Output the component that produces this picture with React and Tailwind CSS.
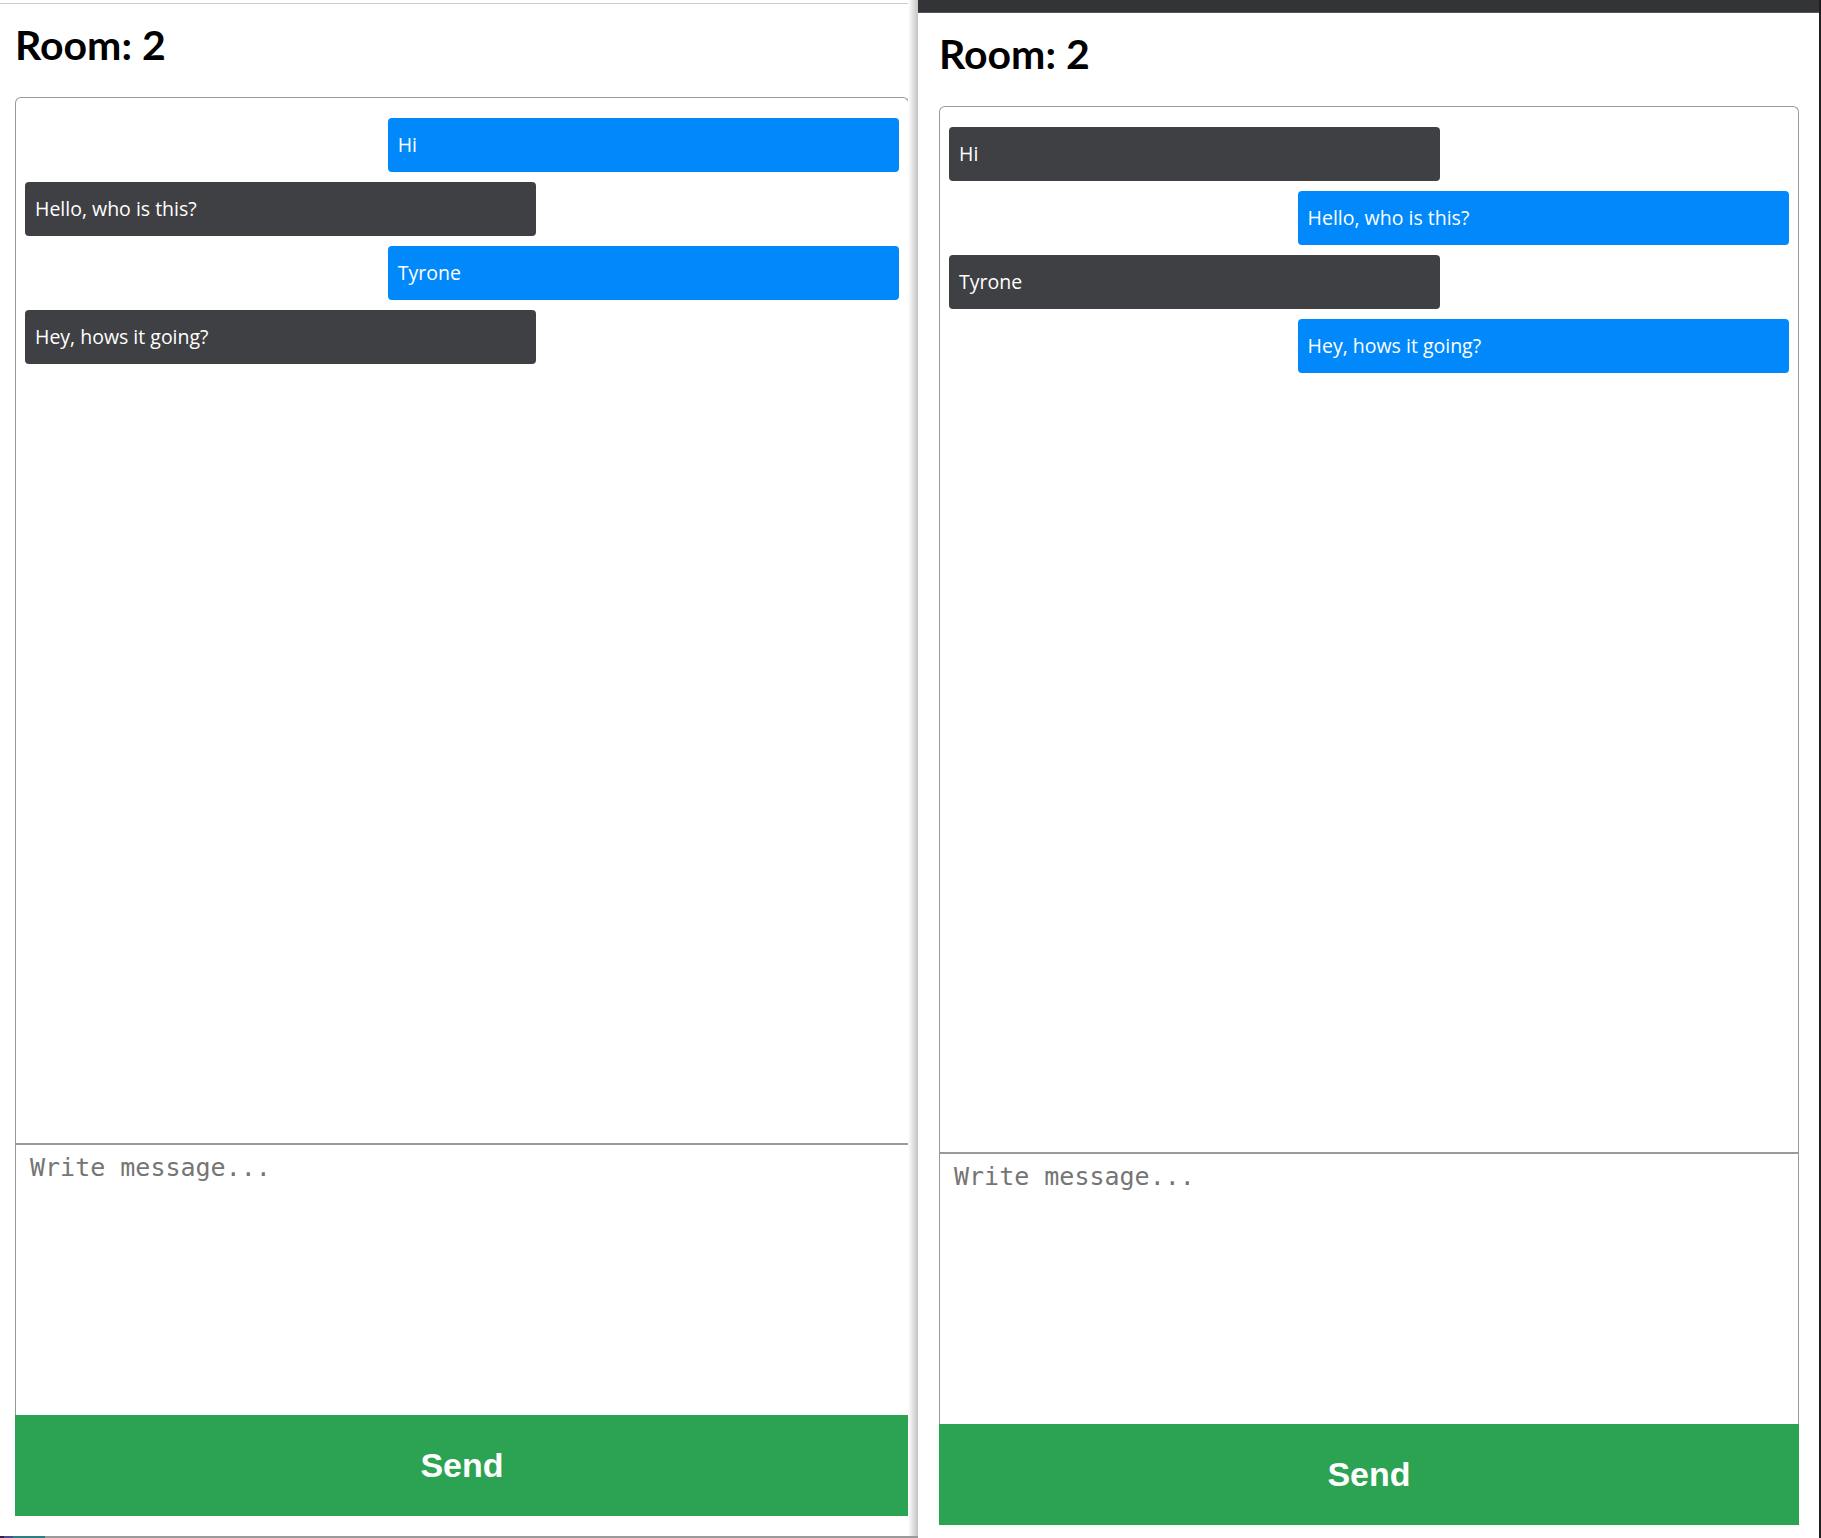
import React from 'react';

const leftMessages = [
  { id: 1, text: 'Hi', mine: true },
  { id: 2, text: 'Hello, who is this?', mine: false },
  { id: 3, text: 'Tyrone', mine: true },
  { id: 4, text: 'Hey, hows it going?', mine: false },
];

// same chat seen from the other user
const rightMessages = leftMessages.map(m => ({ ...m, mine: !m.mine }));

const Bubble = ({ message }) => (
  <div className={`flex ${message.mine ? 'justify-end' : 'justify-start'}`}>
    <div
      className={`w-[58.5%] h-[54px] flex items-center pl-[10px] rounded-[4px] text-white text-[19.5px] font-['Open_Sans',sans-serif] ${
        message.mine ? 'bg-[#0189fb]' : 'bg-[#3f4043]'
      }`}
    >
      {message.text}
    </div>
  </div>
);

const ChatRoom = ({ messages, boxClass }) => (
  <div className="flex flex-col">
    <h1 className="h-[50px] leading-[50px] text-[41px] font-bold text-black font-['Lato',sans-serif] mb-[27px]">
      Room: 2
    </h1>
    <div className={`${boxClass} flex flex-col`}>
      <div className="h-[1318px] flex flex-col border border-b-0 border-[#999] rounded-t-[6px] overflow-hidden">
        <div className="flex-1 flex flex-col gap-[10px] px-[9px] pt-[20px]">
          {messages.map(m => (
            <Bubble key={m.id} message={m} />
          ))}
        </div>
        <textarea
          placeholder="Write message..."
          className="h-[272px] w-full resize-none border-t-2 border-[#9a9a9a] pl-[14px] pt-[8px] text-[25px] leading-[29px] font-['DejaVu_Sans_Mono',monospace] text-black placeholder:text-[#757575] outline-none"
        />
      </div>
      <button className="h-[101px] w-full bg-[#2ca353] text-white text-[34px] font-bold font-['Liberation_Sans',Arial,sans-serif]">
        Send
      </button>
    </div>
  </div>
);

export default function App() {
  return (
    <div className="w-[1821px] h-[1538px] overflow-hidden bg-white flex">
      {/* left browser window */}
      <div className="w-[918px] h-full flex">
        <div className="w-[908px] h-full flex flex-col">
          <div className="h-[3px]" />
          <div className="h-px bg-[#cccccc]" />
          <div className="flex-1 pt-[16px] pl-[15px]">
            <ChatRoom messages={leftMessages} boxClass="w-[894px]" />
          </div>
          <div className="h-[2px] flex bg-[#9a9a9a]">
            <div className="w-[4px] bg-[#3b1d4a]" />
            <div className="w-[9px] bg-[#4a4a8c]" />
            <div className="w-[32px] bg-[#2e7d80]" />
          </div>
        </div>
        <div className="w-[10px] h-full flex flex-col">
          <div className="flex-1 bg-gradient-to-r from-white to-[#c4c4c4]" />
          <div className="h-[2px] bg-[#9a9a9a]" />
        </div>
      </div>

      {/* right browser window */}
      <div className="w-[901px] h-full flex flex-col">
        <div className="h-[12px] bg-[#333438]" />
        <div className="h-px bg-[#55565a]" />
        <div className="flex-1 pt-[16px] pl-[21px]">
          <ChatRoom messages={rightMessages} boxClass="w-[860px]" />
        </div>
      </div>
      <div className="w-[2px] h-full bg-[#1e1e1e]" />
    </div>
  );
}
